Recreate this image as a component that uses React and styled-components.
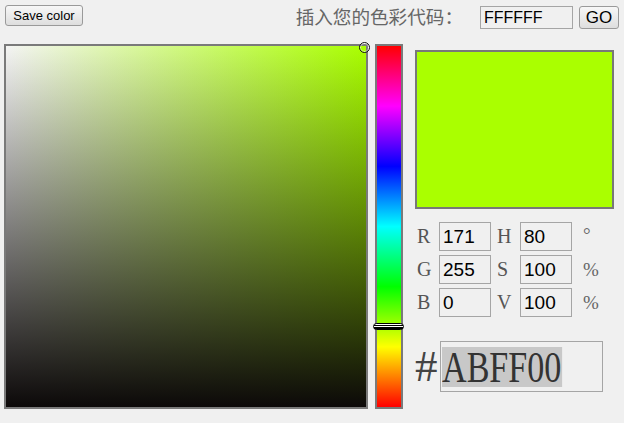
import React from "react";
import styled, { createGlobalStyle } from "styled-components";

const Global = createGlobalStyle`
  html, body { margin: 0; padding: 0; background: #f0f0f0; }
  body { width: 624px; height: 423px; overflow: hidden; font-family: "Liberation Sans", Arial, sans-serif; }
  * { box-sizing: border-box; }
`;

const Page = styled.div`
  width: 624px;
  height: 423px;
  background: #f0f0f0;
`;

const TopBar = styled.div`
  display: flex;
  justify-content: space-between;
  align-items: flex-start;
  height: 44px;
  padding: 5px 5px 0 5px;
`;

const Button = styled.button`
  height: ${(p) => p.$h}px;
  width: ${(p) => p.$w}px;
  margin: 0;
  padding: 0;
  border: 1px solid #9a9a9a;
  border-radius: 3px;
  background: linear-gradient(#f7f7f7, #dedede);
  color: #000;
  font-family: "Liberation Sans", Arial, sans-serif;
  font-size: ${(p) => p.$fs}px;
  line-height: 1;
`;

const CodeGroup = styled.div`
  display: flex;
  align-items: center;
  margin-top: 1px;
`;

const CodeLabel = styled.span`
  font-family: "Liberation Serif", "Noto Sans CJK SC", serif;
  font-size: 18.6px;
  line-height: 23px;
  color: #666;
  margin-right: 17px;
`;

const TextBox = styled.input`
  width: ${(p) => p.$w}px;
  height: ${(p) => p.$h}px;
  margin: 0 ${(p) => p.$mr || 0}px 0 0;
  padding: 0 3px;
  border: 1px solid #a5a5a5;
  background: transparent;
  color: #000;
  font-family: "Liberation Sans", Arial, sans-serif;
  font-size: ${(p) => p.$fs}px;
  outline: none;
`;

const Main = styled.div`
  display: flex;
  align-items: flex-start;
  padding-left: 4px;
`;

const SVSquare = styled.div`
  position: relative;
  width: 364px;
  height: 365px;
  border: 2px solid #7a7a7a;
  background: linear-gradient(to top, #0c0909, rgba(0, 0, 0, 0)),
    linear-gradient(to right, #f4f4f4, #aaff00);
`;

const SVMarker = styled.div`
  position: absolute;
  right: -4px;
  top: -4px;
  width: 11px;
  height: 11px;
  border-radius: 50%;
  border: 1.5px solid #111;
  box-shadow: inset 0 0 0 1px rgba(255, 255, 255, 0.6);
`;

const HueBar = styled.div`
  position: relative;
  margin-left: 7px;
  width: 28px;
  height: 365px;
  border: 2px solid #7a7a7a;
  background: linear-gradient(
    to bottom,
    #ff0000 0%,
    #ff00ff 16.67%,
    #0000ff 33.33%,
    #00ffff 50%,
    #00ff00 66.67%,
    #ffff00 83.33%,
    #ff0000 100%
  );
`;

const HueMarker = styled.div`
  position: absolute;
  left: -4px;
  right: -3px;
  top: 277px;
  height: 7px;
  border: 1px solid #000;
  border-radius: 4px;
  background: linear-gradient(
    to bottom,
    #fff 0,
    #fff 1px,
    #000 1px,
    #000 2px,
    #fff 2px,
    #fff 3px,
    #000 3px
  );
`;

const Side = styled.div`
  display: flex;
  flex-direction: column;
  margin-left: 12px;
  padding-top: 6px;
`;

const Preview = styled.div`
  width: 199px;
  height: 159px;
  border: 2px solid #787878;
  background: #aaff00;
`;

const Grid = styled.div`
  margin-top: 13px;
  display: grid;
  grid-template-columns: 24px 52px 29px 52px auto;
  grid-auto-rows: 29px;
  row-gap: 4px;
`;

const Label = styled.span`
  display: flex;
  align-items: center;
  padding-left: ${(p) => p.$pl}px;
  font-family: "Liberation Serif", "Times New Roman", serif;
  font-size: 20px;
  color: #555;
`;

const Unit = styled.span`
  display: flex;
  align-items: ${(p) => (p.$top ? "flex-start" : "center")};
  padding-left: 11px;
  padding-top: ${(p) => (p.$top ? 2 : 0)}px;
  font-family: "Liberation Serif", "Times New Roman", serif;
  font-size: 19px;
  color: #666;
`;

const HexRow = styled.div`
  margin-top: 24px;
  display: flex;
  align-items: center;
`;

const Hash = styled.span`
  width: 25px;
  font-family: "Liberation Serif", "Times New Roman", serif;
  font-size: 45px;
  line-height: 51px;
  color: #444;
`;

const HexBox = styled.div`
  width: 163px;
  height: 51px;
  border: 1px solid #a5a5a5;
  padding: 5px 0 0 1px;
`;

const HexSel = styled.span`
  display: inline-block;
  height: 40px;
  width: 155px;
  background: #c8c8c8;
  font-family: "Liberation Serif", "Times New Roman", serif;
  font-size: 44px;
  line-height: 42px;
  color: #333;
  transform: scaleX(0.775);
  transform-origin: left center;
  white-space: nowrap;
`;

const rows = [
  ["R", "171", "H", "80", "°"],
  ["G", "255", "S", "100", "%"],
  ["B", "0", "V", "100", "%"],
];

export default function App() {
  return (
    <Page>
      <Global />
      <TopBar>
        <Button $w={78} $h={21} $fs={13}>Save color</Button>
        <CodeGroup>
          <CodeLabel>插入您的色彩代码：</CodeLabel>
          <TextBox $w={93} $h={23} $fs={16} $mr={6} defaultValue="FFFFFF" />
          <Button $w={40} $h={23} $fs={17}>GO</Button>
        </CodeGroup>
      </TopBar>
      <Main>
        <SVSquare>
          <SVMarker />
        </SVSquare>
        <HueBar>
          <HueMarker />
        </HueBar>
        <Side>
          <Preview />
          <Grid>
            {rows.map(([a, av, b, bv, u]) => (
              <React.Fragment key={a}>
                <Label $pl={2}>{a}</Label>
                <TextBox $w={52} $h={29} $fs={19} defaultValue={av} />
                <Label $pl={6}>{b}</Label>
                <TextBox $w={52} $h={29} $fs={19} defaultValue={bv} />
                <Unit $top={u === "°"}>{u}</Unit>
              </React.Fragment>
            ))}
          </Grid>
          <HexRow>
            <Hash>#</Hash>
            <HexBox>
              <HexSel>ABFF00</HexSel>
            </HexBox>
          </HexRow>
        </Side>
      </Main>
    </Page>
  );
}
